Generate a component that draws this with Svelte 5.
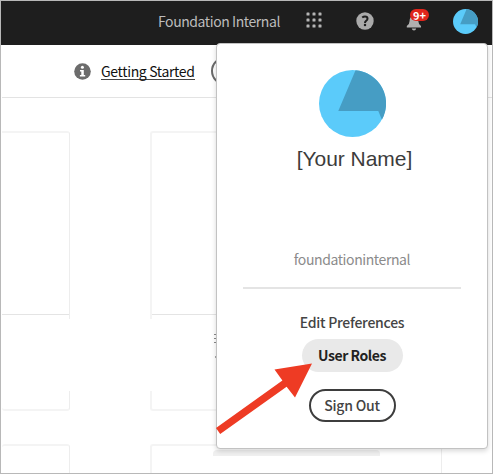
<script>
  const dots = [0, 1, 2].flatMap((r) => [0, 1, 2].map((c) => ({ x: c * 6, y: r * 6 })));
</script>

<div class="window">
  <header>
    <span class="org">Foundation Internal</span>
    <svg class="apps" width="17" height="17" viewBox="0 0 17 17">
      {#each dots as d}
        <rect x={d.x + 0.5} y={d.y + 0.5} width="3" height="3" rx=".6" fill="#b5b5b5" />
      {/each}
    </svg>
    <svg class="help" width="18" height="18" viewBox="0 0 18 18">
      <circle cx="9" cy="9" r="8.7" fill="#aaa" />
      <path d="M6.2 5.5Q7.5 4.5 9 4.5Q11.5 4.5 11.5 6.7Q11.5 7.8 10.2 8.8Q9 9.7 9 11" fill="none" stroke="#1e1e1e" stroke-width="2" />
      <circle cx="9" cy="13.1" r="1.25" fill="#1e1e1e" />
    </svg>
    <div class="bell">
      <svg width="16" height="18" viewBox="0 0 16 18">
        <path d="M8 1Q9.5 1 9.5 2.5Q12.3 4 12.3 8Q12.3 11 15 13V14.4H.8V13Q3.6 11 3.6 8Q3.6 4 6.5 2.5Q6.5 1 8 1Z" fill="#b0b0b0" />
        <path d="M5.7 15.5H10.2Q9.8 17.6 8 17.6Q6.2 17.6 5.7 15.5Z" fill="#b0b0b0" />
      </svg>
      <span class="badge">9+</span>
    </div>
    <svg class="mini" width="25" height="25" viewBox="0 0 66 66">
      <circle cx="33" cy="33" r="33" fill="#5bcbfa" />
      <path d="M36 0.2A33 33 0 0 1 62 49L58.4 40.3H19Z" fill="#469dc4" />
    </svg>
  </header>

  <nav>
    <svg class="info" width="17" height="17" viewBox="0 0 17 17">
      <circle cx="8.5" cy="8.5" r="8.3" fill="#6c6c6c" />
      <circle cx="8.4" cy="4.2" r="1.5" fill="#fff" />
      <path d="M6 7H9.8V12H11.2V13.5H5.9V12H7.3V8.5H6Z" fill="#fff" />
    </svg>
    <span class="link">Getting Started</span>
    <span class="outline"></span>
  </nav>

  <main>
    <div class="row tops">
      <div class="card left"></div>
      <div class="card right"></div>
    </div>
    <div class="row labels">
      <svg width="10" height="50" viewBox="0 0 10 50">
        <path d="M0 15.5H3M0 19.5H3M0 23.5H3" stroke="#888" stroke-width="1" />
        <path d="M1 37.5L3 41V37.5Z" fill="#333" />
      </svg>
    </div>
    <div class="row bottoms">
      <div class="card left"></div>
      <div class="card right"></div>
    </div>
    <div class="row next">
      <div class="card left"></div>
      <div class="card right"></div>
    </div>
  </main>

  <div class="chip"></div>
  <section class="panel">
    <svg class="avatar" width="67" height="67" viewBox="0 0 66 66">
      <circle cx="33" cy="33" r="33" fill="#5bcbfa" />
      <path d="M36 0.2A33 33 0 0 1 62 49L58.4 40.3H19Z" fill="#469dc4" />
    </svg>
    <div class="name">[Your Name]</div>
    <div class="account">foundationinternal</div>
    <hr />
    <div class="edit">Edit Preferences</div>
    <div class="roles">User Roles</div>
    <div class="signout">Sign Out</div>
  </section>

  <svg class="arrow" width="100" height="76" viewBox="0 0 100 76">
    <path d="M96 3.5L58.5 9.5L66.4 20.5L0 68L4.2 74L70.6 26.8L79 37.5Z" fill="#ee3b24" />
  </svg>
</div>

<style>
  .window {
    position: relative;
    box-sizing: border-box;
    width: 493px;
    height: 474px;
    border: 1px solid #b8b8b8;
    background: #fff;
    overflow: hidden;
    font-family: "Noto Sans CJK SC", "Noto Sans", sans-serif;
    font-size: 14px;
    line-height: 20px;
    white-space: nowrap;
  }
  svg { display: block; flex: none; }
  header {
    display: flex;
    align-items: center;
    height: 44px;
    padding-left: 157px;
    background: #1e1e1e;
  }
  .org { width: 122px; color: #bcbcbc; margin-top: -5px; letter-spacing: -.42px; }
  .apps { margin-left: 26px; margin-top: -5px; }
  .help { margin-left: 33px; margin-top: -4px; }
  .bell { position: relative; margin-left: 32px; margin-top: -3px; }
  .badge {
    position: absolute;
    left: 4px;
    top: -4px;
    width: 19px;
    height: 12px;
    border-radius: 6px;
    background: #e0251b;
    color: #fff;
    font-size: 11px;
    font-weight: 700;
    line-height: 12px;
    text-align: center;
  }
  .mini { margin-left: 31px; margin-top: -4px; }
  nav {
    box-sizing: border-box;
    display: flex;
    align-items: center;
    height: 53px;
    margin-left: 1px;
    padding-left: 72px;
    border-bottom: 1px solid #e3e3e3;
  }
  .link {
    width: 94px;
    height: 17px;
    margin-left: 10px;
    border-bottom: 1px solid #444;
    color: #111;
    line-height: 18px;
    letter-spacing: -.34px;
  }
  .outline {
    box-sizing: border-box;
    width: 60px;
    height: 28px;
    margin-left: 16px;
    border: 2px solid #6a6a6a;
    border-radius: 14px;
  }
  main { padding-left: 1px; }
  .row { display: flex; gap: 80px; }
  .card { box-sizing: border-box; border: 1px solid #ededed; }
  .left { width: 68px; border-left: 0; }
  .right { width: 292px; border-left: 2px solid #f4f4f4; }
  .tops { padding-top: 33px; }
  .tops .card { height: 188px; border-top: 2px solid #f4f4f4; border-bottom: 0; border-radius: 3px 3px 0 0; }
  .tops .card::before { content: ""; display: block; height: 181px; border-bottom: 1px solid #e4e4e4; }
  .tops .left, .bottoms .left, .next .left { border-top-left-radius: 0; border-bottom-left-radius: 0; }
  .labels { height: 72px; padding-left: 212px; }
  .bottoms .card { height: 20px; border-top: 0; border-bottom: 2px solid #f4f4f4; border-radius: 0 0 3px 3px; }
  .next { padding-top: 33px; }
  .next .card { height: 29px; border-top: 2px solid #f4f4f4; border-bottom: 0; border-radius: 3px 3px 0 0; }
  .chip {
    position: absolute;
    left: 212px;
    top: 449px;
    width: 167px;
    height: 6px;
    border-radius: 4px 4px 0 0;
    background: #f0f0f0;
  }
  .panel {
    position: absolute;
    box-sizing: border-box;
    left: 215px;
    top: 42px;
    width: 272px;
    height: 406px;
    padding: 26px 24px 0;
    display: flex;
    flex-direction: column;
    align-items: center;
    border: 1px solid #c2c2c2;
    border-radius: 4px;
    background: #fff;
    box-shadow: 0 2px 5px rgba(0, 0, 0, .16);
    color: #444;
  }
  .name {
    margin-top: 9px;
    margin-left: 5px;
    font: 21px/26px "Liberation Sans", Arial, sans-serif;
    letter-spacing: -.05px;
    color: #3c3c3c;
  }
  .account { margin-top: 77px; color: #8b8b8b; letter-spacing: -.4px; }
  hr { width: 218px; height: 2px; margin: 18px 0 0; border: 0; background: #e4e4e4; }
  .edit { margin-top: 23px; font-weight: 500; letter-spacing: -.25px; }
  .roles {
    width: 101px;
    height: 33px;
    margin-top: 7px;
    border-radius: 17px;
    background: #e9e9e9;
    color: #222;
    font-weight: 700;
    line-height: 33px;
    letter-spacing: -.45px;
    text-align: center;
  }
  .signout {
    box-sizing: border-box;
    width: 87px;
    height: 33px;
    margin-top: 17px;
    border: 2px solid #3d3d3d;
    border-radius: 17px;
    font-weight: 500;
    line-height: 29px;
    letter-spacing: -.2px;
    text-align: center;
  }
  .arrow { position: absolute; left: 215px; top: 359px; }
</style>
